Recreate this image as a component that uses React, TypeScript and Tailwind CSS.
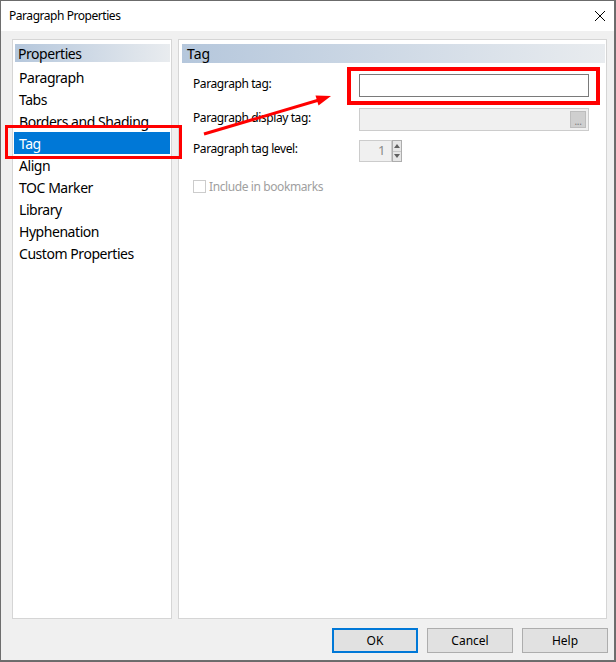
import React from 'react';

const font = { fontFamily: '"Noto Sans", "Open Sans", sans-serif' };

const items = [
  'Paragraph',
  'Tabs',
  'Borders and Shading',
  'Tag',
  'Align',
  'TOC Marker',
  'Library',
  'Hyphenation',
  'Custom Properties',
];

function CloseIcon() {
  return (
    <svg width="12" height="12" viewBox="0 0 12 12">
      <path d="M1 1 L11 11 M11 1 L1 11" stroke="#000" strokeWidth="1" />
    </svg>
  );
}

function Spinner() {
  return (
    <div className="flex h-[22px]">
      <div className="w-[33px] h-full border border-[#cccccc] bg-[#f0f0f0] flex items-center justify-end pr-[6px] text-[13px] text-[#8a8a8a]">
        1
      </div>
      <div className="flex flex-col w-[10px] h-full border border-[#adadad] bg-[#e6e6e6]">
        <div className="flex-1 flex items-center justify-center border-b border-[#c8c8c8]">
          <svg width="6" height="4" viewBox="0 0 6 4"><path d="M0 4 L3 0 L6 4 Z" fill="#606060" /></svg>
        </div>
        <div className="flex-1 flex items-center justify-center">
          <svg width="6" height="4" viewBox="0 0 6 4"><path d="M0 0 L3 4 L6 0 Z" fill="#606060" /></svg>
        </div>
      </div>
    </div>
  );
}

export default function App() {
  return (
    <div className="w-[616px] h-[662px] bg-[#6b6b6b] pt-[1px]" style={font}>
      <div className="relative w-[615px] h-[660px] bg-[#f0f0f0] border-l border-r border-b border-[#6e6e6e] flex flex-col">
        {/* Title bar */}
        <div className="h-[30px] bg-white flex items-center justify-between pl-[8px] pr-[8px] shrink-0">
          <span className="text-[12px] text-black tracking-[-0.45px]">Paragraph Properties</span>
          <CloseIcon />
        </div>

        {/* Panels */}
        <div className="flex gap-[6px] pl-[11px] pt-[8px] h-[588px] shrink-0">
          {/* Left list */}
          <div className="w-[160px] h-full bg-white border border-[#d5d5d5] px-[1px] pt-[4px]">
            <div className="h-[18px] ml-[1px] flex items-center pl-[3px] text-[14px] tracking-[-0.45px] text-black bg-gradient-to-r from-[#b5c7dc] to-[#e9ecef]">
              Properties
            </div>
            <div className="mt-[4px] flex flex-col">
              {items.map((item) => (
                <div
                  key={item}
                  className={`h-[22px] flex items-center pl-[5px] text-[14px] tracking-[-0.45px] ${item === 'Tag' ? 'bg-[#0078d7] text-white' : 'text-black'}`}
                >
                  {item}
                </div>
              ))}
            </div>
          </div>

          {/* Right pane */}
          <div className="w-[429px] h-full bg-white border border-[#d5d5d5] pl-[3px] pr-[1px] pt-[4px]">
            <div className="h-[19px] flex items-center pl-[5px] text-[14px] text-black bg-gradient-to-r from-[#b5c7dc] to-[#e9ecef]">
              Tag
            </div>
            <div className="pl-[11px] pt-[11px] flex flex-col text-[12px] tracking-[-0.4px] text-black">
              <div className="flex items-center h-[23px]">
                <span className="w-[166px] -mt-[4px]">Paragraph tag:</span>
                <div className="w-[230px] h-full border border-[#7a7a7a] bg-white" />
              </div>
              <div className="flex items-center h-[23px] mt-[11px]">
                <span className="w-[166px] -mt-[4px]">Paragraph display tag:</span>
                <div className="w-[230px] h-full border border-[#cccccc] bg-[#f0f0f0] flex items-center justify-end pr-[2px]">
                  <div className="w-[16px] h-[17px] bg-[#cfcfcf] border border-[#bdbdbd] flex items-end justify-center text-[10px] leading-[12px] text-[#7a7a7a]">
                    ...
                  </div>
                </div>
              </div>
              <div className="flex items-center h-[22px] mt-[9px]">
                <span className="w-[166px] -mt-[4px]">Paragraph tag level:</span>
                <Spinner />
              </div>
              <div className="flex items-center gap-[3px] mt-[18px] h-[13px]">
                <div className="w-[13px] h-[13px] border border-[#cccccc] bg-white" />
                <span className="text-[#a0a0a0]">Include in bookmarks</span>
              </div>
            </div>
          </div>
        </div>

        {/* Buttons */}
        <div className="flex justify-end gap-[9px] pr-[6px] pt-[9px]">
          <button className="w-[86px] h-[25px] bg-[#e1e1e1] border-2 border-[#0078d7] text-[12px] text-black">OK</button>
          <button className="w-[86px] h-[25px] bg-[#e1e1e1] border border-[#adadad] text-[12px] text-black">Cancel</button>
          <button className="w-[86px] h-[25px] bg-[#e1e1e1] border border-[#adadad] text-[12px] text-black">Help</button>
        </div>

        {/* Annotations */}
        <div className="absolute left-[4px] top-[124px] w-[177px] h-[34px] border-[3px] border-[#ff0000] pointer-events-none" />
        <div className="absolute left-[346px] top-[66px] w-[253px] h-[38px] border-[4px] border-[#ff0000] pointer-events-none" />
        <svg className="absolute left-0 top-0 pointer-events-none" width="615" height="660" viewBox="0 0 615 660">
          <line x1="203" y1="133" x2="318" y2="99" stroke="#ff0000" strokeWidth="3" />
          <path d="M330 95 L314.5 94.5 L317.5 104.5 Z" fill="#ff0000" />
        </svg>
      </div>
    </div>
  );
}
